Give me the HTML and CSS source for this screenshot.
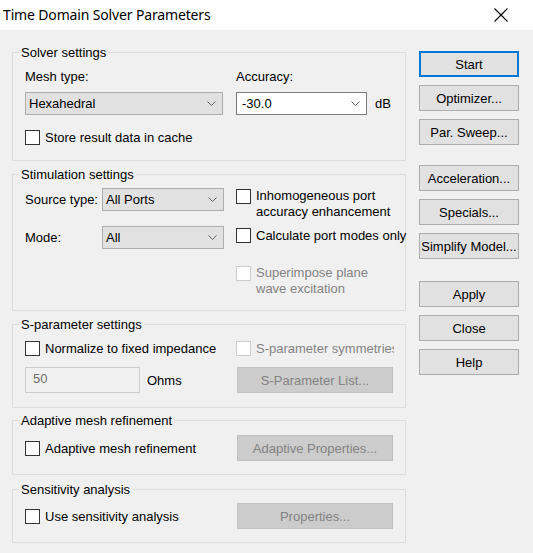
FILE: index.html
```html
<!DOCTYPE html>
<html>
<head>
<meta charset="utf-8">
<link rel="stylesheet" href="styles.css">
</head>
<body>
<div class="window">
  <div class="titlebar">
    <span class="title">Time Domain Solver Parameters</span>
    <svg class="close" width="14" height="14" viewBox="0 0 14 14"><path d="M0.5 0.5 L13.5 13.5 M13.5 0.5 L0.5 13.5" stroke="#000" stroke-width="1.1" fill="none"/></svg>
  </div>
  <div class="main">
    <div class="groups">
      <fieldset class="group g-solver">
        <legend>Solver settings</legend>
        <div class="solver-grid">
          <div class="label">Mesh type:</div>
          <div class="label">Accuracy:</div>
          <div class="select sel-mesh"><span>Hexahedral</span><svg class="chev" width="9" height="5" viewBox="0 0 9 5"><path d="M0.5 0.5 L4.5 4.5 L8.5 0.5" stroke="#606060" fill="none"/></svg></div>
          <div class="acc-row">
            <div class="select sel-acc"><span>-30.0</span><svg class="chev" width="9" height="5" viewBox="0 0 9 5"><path d="M0.5 0.5 L4.5 4.5 L8.5 0.5" stroke="#606060" fill="none"/></svg></div>
            <span class="unit">dB</span>
          </div>
        </div>
        <label class="check cache-check"><span class="box"></span><span class="ctext">Store result data in cache</span></label>
      </fieldset>

      <fieldset class="group g-stim">
        <legend>Stimulation settings</legend>
        <div class="stim-grid">
          <div class="stim-left">
            <div class="field-row">
              <span class="flabel">Source type:</span>
              <div class="select sel-small"><span>All Ports</span><svg class="chev" width="9" height="5" viewBox="0 0 9 5"><path d="M0.5 0.5 L4.5 4.5 L8.5 0.5" stroke="#606060" fill="none"/></svg></div>
            </div>
            <div class="field-row mode-row">
              <span class="flabel">Mode:</span>
              <div class="select sel-small"><span>All</span><svg class="chev" width="9" height="5" viewBox="0 0 9 5"><path d="M0.5 0.5 L4.5 4.5 L8.5 0.5" stroke="#606060" fill="none"/></svg></div>
            </div>
          </div>
          <div class="stim-right">
            <label class="check multi c1"><span class="box"></span><span class="ctext">Inhomogeneous port<br>accuracy enhancement</span></label>
            <label class="check multi c2"><span class="box"></span><span class="ctext nowrap">Calculate port modes only</span></label>
            <label class="check multi c3 disabled"><span class="box"></span><span class="ctext">Superimpose plane<br>wave excitation</span></label>
          </div>
        </div>
      </fieldset>

      <fieldset class="group g-spar">
        <legend>S-parameter settings</legend>
        <div class="two-col row-top">
          <label class="check"><span class="box"></span><span class="ctext">Normalize to fixed impedance</span></label>
          <label class="check disabled sym"><span class="box"></span><span class="ctext clip">S-parameter symmetries</span></label>
        </div>
        <div class="two-col row-second">
          <div class="imp">
            <div class="edit">50</div>
            <span class="unit">Ohms</span>
          </div>
          <div class="btn disabled-btn">S-Parameter List...</div>
        </div>
      </fieldset>

      <fieldset class="group g-adapt">
        <legend>Adaptive mesh refinement</legend>
        <div class="two-col btn-row">
          <label class="check"><span class="box"></span><span class="ctext">Adaptive mesh refinement</span></label>
          <div class="btn disabled-btn">Adaptive Properties...</div>
        </div>
      </fieldset>

      <fieldset class="group g-sens">
        <legend>Sensitivity analysis</legend>
        <div class="two-col btn-row">
          <label class="check"><span class="box"></span><span class="ctext">Use sensitivity analysis</span></label>
          <div class="btn disabled-btn">Properties...</div>
        </div>
      </fieldset>
    </div>

    <div class="actions">
      <div class="btn side default">Start</div>
      <div class="btn side">Optimizer...</div>
      <div class="btn side">Par. Sweep...</div>
      <div class="btn side sep">Acceleration...</div>
      <div class="btn side">Specials...</div>
      <div class="btn side">Simplify Model...</div>
      <div class="btn side sep2">Apply</div>
      <div class="btn side">Close</div>
      <div class="btn side">Help</div>
    </div>
  </div>
</div>
</body>
</html>
```

FILE: styles.css
```css
html, body {
  margin: 0;
  padding: 0;
}
body {
  width: 533px;
  height: 553px;
  background: #f0f0f0;
  font-family: "Liberation Sans", Arial, sans-serif;
  font-size: 13px;
  color: #000;
  overflow: hidden;
}
.window {
  width: 533px;
  height: 553px;
  background: #f0f0f0;
}
.titlebar {
  height: 30px;
  background: #fff;
  display: flex;
  align-items: center;
  justify-content: space-between;
  padding: 0 25px 0 3px;
  box-sizing: border-box;
}
.title {
  font-family: "Noto Sans", "Open Sans", sans-serif;
  font-size: 14px;
  letter-spacing: -0.15px;
  color: #000;
  margin-top: -1px;
}
.close {
  display: block;
  margin-top: -1px;
}
.main {
  display: flex;
  padding: 14px 0 0 12px;
}
.groups {
  width: 394px;
  display: flex;
  flex-direction: column;
}
.group {
  margin: 0;
  padding: 0 12px;
  border: 1px solid #dcdcdc;
  min-width: 0;
  box-sizing: border-box;
  position: relative;
}
.group legend {
  padding: 1px 2px 0;
  margin-left: -6px;
  line-height: 16px;
  height: 16px;
  box-sizing: border-box;
}
.g-solver { height: 117px; }
.g-stim { height: 145px; margin-top: 5px; }
.g-spar { height: 92px; margin-top: 5px; }
.g-adapt { height: 63px; margin-top: 4px; }
.g-sens { height: 62px; margin-top: 6px; }

.label {
  line-height: 16px;
}
.solver-grid {
  display: grid;
  grid-template-columns: 198px auto;
  column-gap: 13px;
  row-gap: 7px;
  margin-top: 9px;
}
.select {
  height: 23px;
  box-sizing: border-box;
  border: 1px solid #adadad;
  background: #e1e1e1;
  display: flex;
  align-items: center;
  justify-content: space-between;
  padding: 0 6px 0 3px;
}
.select span {
  line-height: 16px;
}
.chev {
  display: block;
}
.sel-mesh {
  width: 198px;
}
.acc-row {
  display: flex;
  align-items: center;
}
.sel-acc {
  width: 131px;
  background: #fff;
  border-color: #7a7a7a;
  padding-left: 5px;
}
.acc-row .unit {
  margin-left: 8px;
}
.check {
  display: flex;
  align-items: center;
  line-height: 16px;
}
.check .ctext {
  padding-top: 2px;
}
.box {
  width: 15px;
  height: 15px;
  box-sizing: border-box;
  border: 1px solid #333;
  background: #fff;
  margin-right: 5px;
  flex: none;
}
.cache-check {
  margin-top: 13px;
}
.check.disabled .ctext {
  color: #838383;
}
.check.disabled .box {
  border-color: #cccccc;
}
.multi {
  align-items: flex-start;
}
.multi .ctext {
  padding-top: 0;
}
.multi .box {
  margin-top: 1px;
}
.nowrap {
  white-space: nowrap;
}
.stim-grid {
  display: flex;
}
.stim-left {
  width: 199px;
  margin-right: 12px;
  padding-top: 6px;
}
.field-row {
  display: flex;
  align-items: center;
}
.flabel {
  width: 77px;
}
.sel-small {
  width: 122px;
}
.mode-row {
  margin-top: 15px;
}
.stim-right {
  padding-top: 6px;
}
.c2 { margin-top: 8px; }
.c3 { margin-top: 21px; }
.c2 .box { margin-top: 0; }

.two-col {
  display: flex;
  align-items: center;
}
.two-col > :first-child {
  width: 211px;
  flex: none;
}
.row-top {
  margin-top: 7px;
}
.sym .clip {
  width: 138px;
  overflow: hidden;
  white-space: nowrap;
}
.row-second {
  margin-top: 10px;
}
.imp {
  display: flex;
  align-items: center;
}
.edit {
  width: 115px;
  height: 26px;
  box-sizing: border-box;
  border: 1px solid #cccccc;
  background: #f0f0f0;
  color: #6d6d6d;
  padding: 3px 0 0 7px;
  line-height: 16px;
}
.imp .unit {
  margin-left: 7px;
  padding-top: 1px;
}
.btn {
  height: 26px;
  box-sizing: border-box;
  border: 1px solid #adadad;
  background: #e1e1e1;
  display: flex;
  align-items: center;
  justify-content: center;
  line-height: 16px;
  padding-top: 2px;
}
.disabled-btn {
  width: 156px;
  margin-left: 1px;
  background: #cccccc;
  border-color: #bfbfbf;
  color: #838383;
}
.btn-row {
  margin-top: 7px;
}
.btn-row > :first-child {
  width: 212px;
}
.btn-row .disabled-btn {
  margin-left: 0;
}
.g-sens .btn-row {
  margin-top: 6px;
}
.actions {
  margin-left: 13px;
  padding-top: 7px;
  display: flex;
  flex-direction: column;
  gap: 8px;
  width: 100px;
}
.side {
  width: 100px;
}
.default {
  border: 2px solid #0078d7;
}
.sep { margin-top: 12px; }
.sep2 { margin-top: 14px; }
```
